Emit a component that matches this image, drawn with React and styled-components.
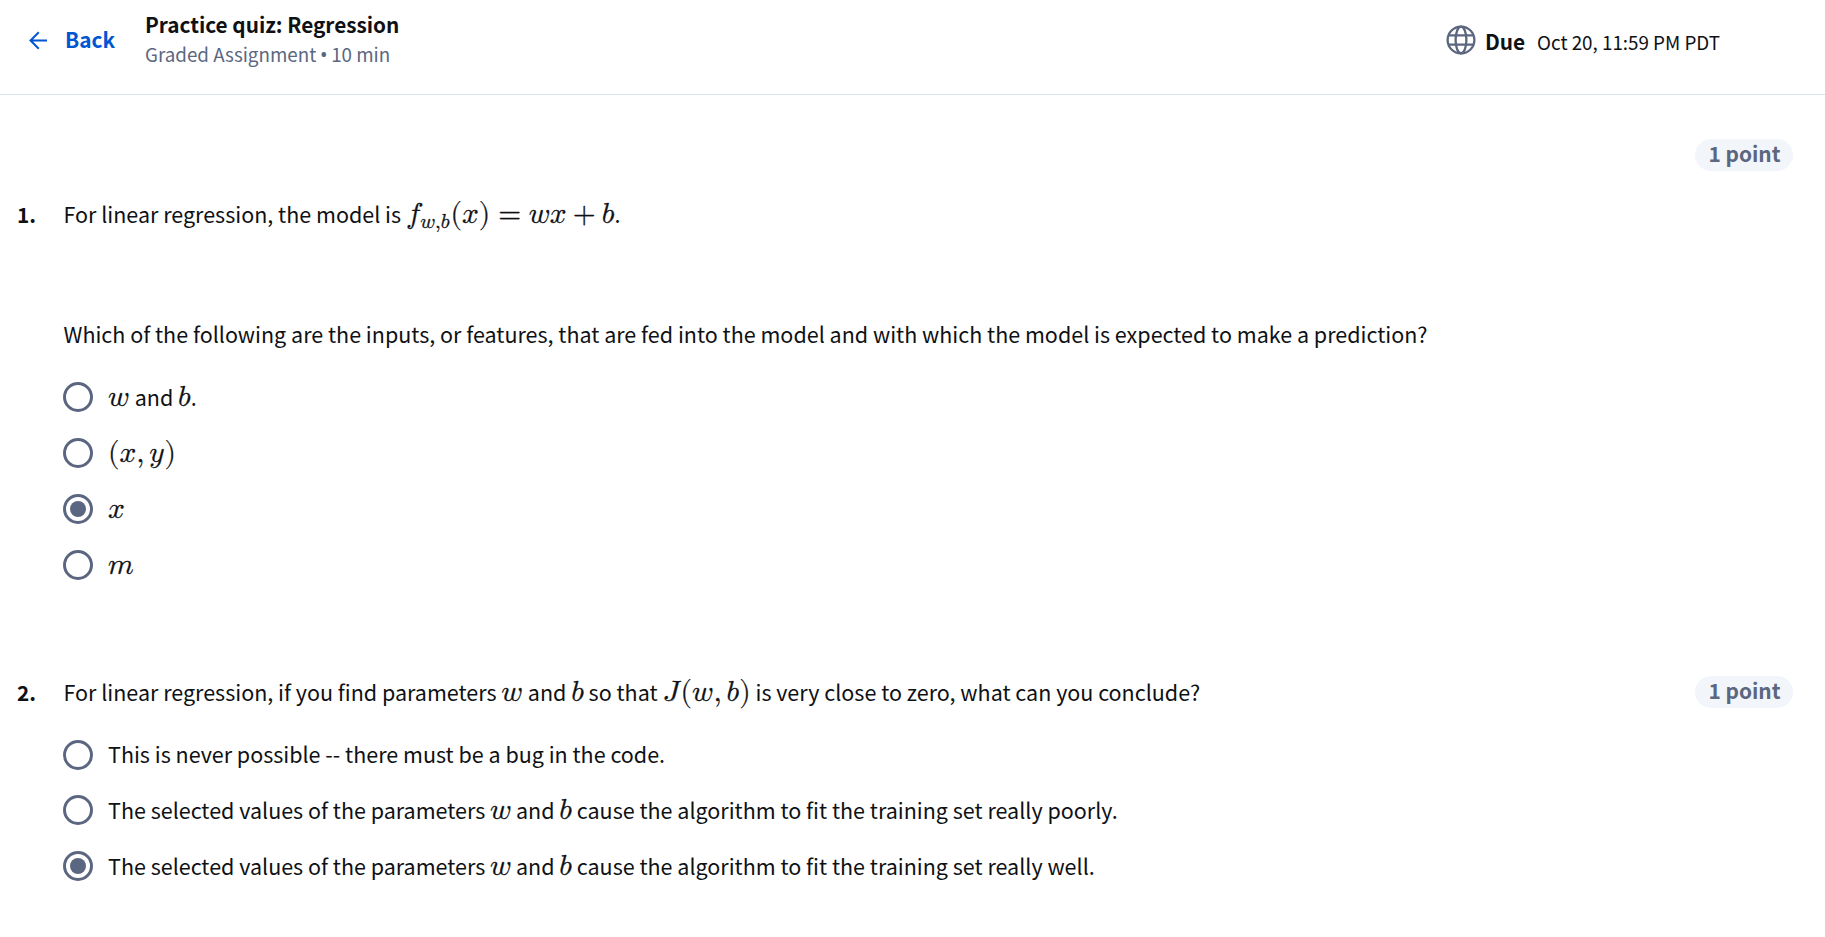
import React from 'react';
import styled, { createGlobalStyle } from 'styled-components';

const GlobalStyle = createGlobalStyle`
  *, *::before, *::after { box-sizing: border-box; }
  body { margin: 0; background: #fff; }
`;

const sans = '"Noto Sans CJK SC", "Noto Sans", sans-serif';

const Page = styled.div`
  width: 100%;
  min-height: 937px;
  background: #fff;
  color: #0f1114;
  font-family: ${sans};
  font-size: 21.5px;
  line-height: 32px;
`;

const Header = styled.header`
  display: flex;
  height: 95px;
  padding-left: 29px;
  padding-right: 105px;
  border-bottom: 1px solid #dae1ed;
`;

const BackLink = styled.a`
  display: flex;
  align-items: center;
  gap: 17px;
  width: 116px;
  height: 32px;
  margin-top: 24px;
  color: #0056d2;
  font-size: 20.8px;
  font-weight: 700;
  line-height: 30px;
  text-decoration: none;
`;

const BackLabel = styled.span`
  padding-bottom: 2px;
`;

const Heading = styled.div`
  flex: 1;
  padding-top: 8px;
`;

const Title = styled.h1`
  margin: 0;
  font-size: 20.76px;
  font-weight: 700;
  line-height: 32px;
`;

const Subtitle = styled.div`
  color: #5b6780;
  font-size: 18.8px;
  line-height: 28px;
`;

const Bullet = styled.span`
  margin: 0 -0.5px;
  font-family: "Noto Sans", sans-serif;
  font-size: 20px;
  line-height: 0;
`;

const Due = styled.div`
  display: flex;
  align-items: baseline;
  height: 32px;
  margin-top: 25px;
`;

const DueLabel = styled.strong`
  margin: 0 12px 0 9px;
  font-size: 20.8px;
`;

const DueDate = styled.span`
  font-size: 18.8px;
`;

const Globe = styled.svg`
  align-self: flex-start;
`;

const PointsRow = styled.div`
  display: flex;
  justify-content: flex-end;
  padding: 44px 32px 0 0;
`;

const Points = styled.span`
  width: 98px;
  height: 32px;
  padding-left: 1px;
  border-radius: 16px;
  background: #f2f5fa;
  color: #5b6780;
  font-size: 20.9px;
  font-weight: 700;
  line-height: 29px;
  text-align: center;
`;

const Question = styled.section`
  display: grid;
  grid-template-columns: 46.5px 1fr auto;
  padding: ${p => p.$top}px 32px 0 17px;
`;

const Number = styled.span`
  font-size: 20.8px;
  font-weight: 700;
`;

const Prompt = styled.div`
  white-space: nowrap;
`;

const Line = styled.p`
  height: 32px;
  margin: 0 0 ${p => p.$gap || 0}px;
`;

const Options = styled.div`
  grid-column: 2;
  display: flex;
  flex-direction: column;
  gap: 26px;
  margin-left: -1px;
  padding-top: ${p => p.$top}px;
`;

const Option = styled.label`
  display: flex;
  gap: 15.5px;
  height: 30px;
  margin-bottom: ${p => (p.$tight ? -1 : 0)}px;
`;

const OptionText = styled.span`
  margin-top: ${p => p.$drop}px;
  white-space: nowrap;
`;

const Radio = styled.span`
  display: flex;
  align-items: center;
  justify-content: center;
  width: 30px;
  height: 30px;
  border: 3px solid #5b6780;
  border-radius: 50%;

  &::after {
    content: "";
    width: 16px;
    height: 16px;
    border-radius: 50%;
    background: ${p => (p.$checked ? '#5b6780' : 'transparent')};
  }
`;

const Math = styled.span`
  font-family: "Latin Modern Math", "Liberation Serif", serif;
  font-size: 29.4px;
  line-height: 0;
  -webkit-text-stroke: 0.3px currentColor;
`;

const Var = styled.span`
  text-transform: math-auto;
  padding-right: ${p => p.$italic || 0}em;
`;

const Sub = styled.span`
  position: relative;
  top: 4.5px;
  margin-right: 0.05em;
  font-size: 0.7em;
`;

const Sym = styled.span`
  padding: 0 ${p => p.$after ?? p.$space ?? 0}em 0 ${p => p.$space ?? 0}em;
`;

const V = ({ children, italic }) => <Math><Var $italic={italic}>{children}</Var></Math>;

const Choice = ({ checked, drop = -1, tight, children }) => (
  <Option $tight={tight}>
    <Radio $checked={checked} />
    <OptionText $drop={drop}>{children}</OptionText>
  </Option>
);

export default function App() {
  return (
    <Page>
      <GlobalStyle />
      <Header>
        <BackLink>
          <svg width="19" height="19" viewBox="0 0 19 19" fill="none" stroke="currentColor" strokeWidth="2">
            <path d="M18 9.5H2M9.8 1.2L1.5 9.5l8.3 8.3" />
          </svg>
          <BackLabel>Back</BackLabel>
        </BackLink>
        <Heading>
          <Title>Practice quiz: Regression</Title>
          <Subtitle>Graded Assignment <Bullet>•</Bullet> 10 min</Subtitle>
        </Heading>
        <Due>
          <Globe width="30" height="30" viewBox="0 0 30 30" fill="none" stroke="#5b6780" strokeWidth="2.3">
            <circle cx="15" cy="15" r="13.4" />
            <path d="M2.5 10.3h25M2.5 19.7h25" />
            <ellipse cx="15" cy="15" rx="5.4" ry="13.4" />
          </Globe>
          <DueLabel>Due</DueLabel>
          <DueDate>Oct 20, 11:59 PM PDT</DueDate>
        </Due>
      </Header>

      <PointsRow><Points>1 point</Points></PointsRow>

      <Question $top={27}>
        <Number>1.</Number>
        <Prompt>
          <Line $gap={88}>
            For linear regression, the model is{' '}
            <Math>
              <Var>f</Var><Sub><Var>w</Var>,<Var>b</Var></Sub>(<Var>x</Var>)
              <Sym $space={0.27} $after={0.26}>=</Sym>
              <Var>w</Var><Var>x</Var>
              <Sym $space={0.21}>+</Sym>
              <Var>b</Var>
            </Math>.
          </Line>
          <Line>
            Which of the following are the inputs, or features, that are fed into the model and with which the model is expected to make a prediction?
          </Line>
        </Prompt>
        <Options $top={32}>
          <Choice><V italic={0.03}>w</V> and <V>b</V>.</Choice>
          <Choice><Math>(<Var>x</Var><Sym $space={0} $after={0.167}>,</Sym><Var $italic={0.03}>y</Var>)</Math></Choice>
          <Choice checked><V>x</V></Choice>
          <Choice><V>m</V></Choice>
        </Options>
      </Question>

      <Question $top={96}>
        <Number>2.</Number>
        <Prompt>
          <Line>
            For linear regression, if you find parameters <V italic={0.02}>w</V> and <V>b</V> so that{' '}
            <Math><Var $italic={0.06}>J</Var>(<Var $italic={0.02}>w</Var><Sym $space={0} $after={0.167}>,</Sym><Var>b</Var>)</Math>{' '}
            is very close to zero, what can you conclude?
          </Line>
        </Prompt>
        <Points>1 point</Points>
        <Options $top={32}>
          <Choice drop={-2} tight>This is never possible -- there must be a bug in the code.</Choice>
          <Choice>The selected values of the parameters <V>w</V> and <V>b</V> cause the algorithm to fit the training set really poorly.</Choice>
          <Choice checked>The selected values of the parameters <V>w</V> and <V>b</V> cause the algorithm to fit the training set really well.</Choice>
        </Options>
      </Question>
    </Page>
  );
}
